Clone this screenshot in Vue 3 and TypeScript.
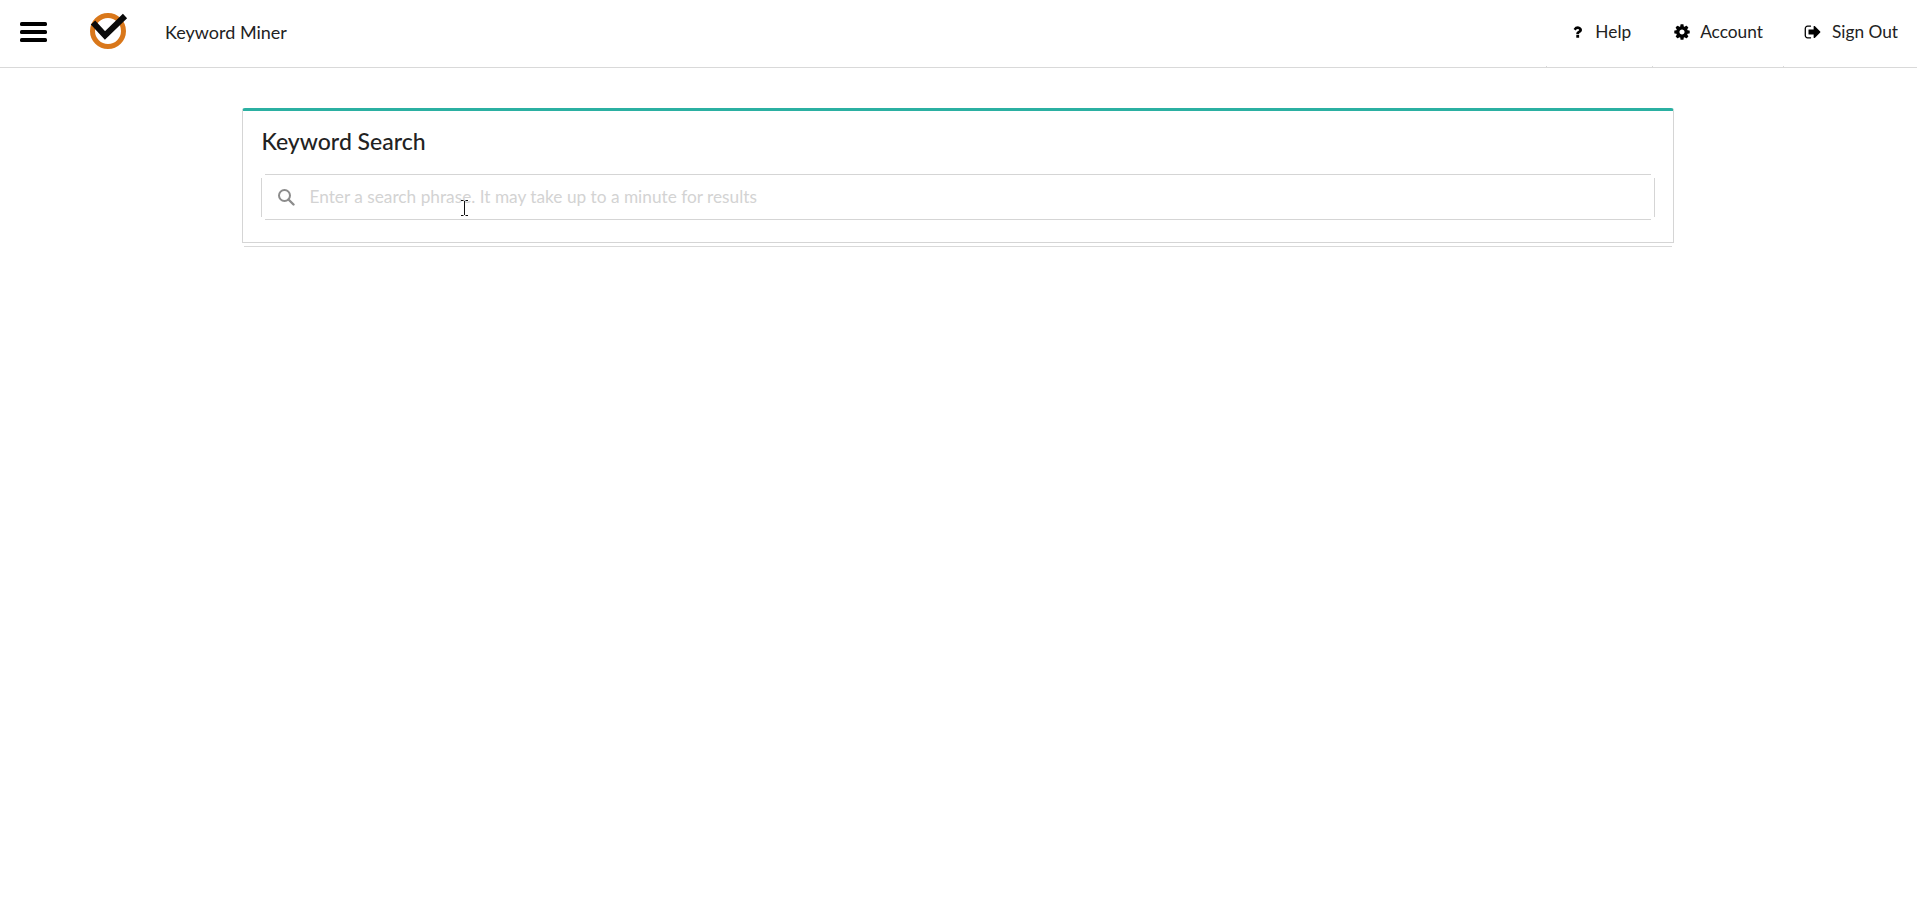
<script setup lang="ts">
const navItems = [
  { label: 'Help', icon: 'help' },
  { label: 'Account', icon: 'account' },
  { label: 'Sign Out', icon: 'signout' },
];

const iconPaths: Record<string, string> = {
  help: 'M1024 1376v240q0 16-12 28t-28 12h-240q-16 0-28-12t-12-28v-240q0-16 12-28t28-12h240q16 0 28 12t12 28zm316-600q0 54-15.5 101t-35 76.5-55 59.5-57.5 43.5-61 35.5q-41 23-68.5 65t-27.5 67q0 17-12 32.5t-28 15.5h-240q-15 0-25.5-18.5t-10.5-37.5v-45q0-83 65-156.5t143-108.5q59-27 84-56t25-76q0-42-46.5-74t-107.5-32q-65 0-108 29-35 25-107 115-13 16-31 16-12 0-25-8l-164-125q-13-10-15.5-25t5.5-28q160-266 464-266 80 0 161 31t146 83 106 127.5 41 158.5z',
  account: 'M1152 896q0-106-75-181t-181-75-181 75-75 181 75 181 181 75 181-75 75-181zm512-109v222q0 12-8 23t-20 13l-185 28q-19 54-39 91 35 50 107 138 10 12 10 25t-9 23q-27 37-99 108t-94 71q-12 0-26-9l-138-108q-44 23-91 38-16 136-29 186-7 28-36 28h-222q-14 0-24.5-8.5t-11.5-21.5l-28-184q-49-16-90-37l-141 107q-10 9-25 9-14 0-25-11-126-114-165-168-7-10-7-23 0-12 8-23 15-21 51-66.5t54-70.5q-27-50-41-99l-183-27q-13-2-21-12.5t-8-23.5v-222q0-12 8-23t19-13l186-28q14-46 39-92-40-57-107-138-10-12-10-24 0-10 9-23 26-36 98.5-107.5t94.5-71.5q13 0 26 10l138 107q44-23 91-38 16-136 29-186 7-28 36-28h222q14 0 24.5 8.5t11.5 21.5l28 184q49 16 90 37l142-107q9-9 24-9 13 0 25 10 129 119 165 170 7 8 7 22 0 12-8 23-15 21-51 66.5t-54 70.5q26 50 41 98l183 28q13 2 21 12.5t8 23.5z',
  signout: 'M704 1440q0 4 1 20t.5 26.5-3 23.5-10 19.5-20.5 6.5h-320q-119 0-203.5-84.5t-84.5-203.5v-704q0-119 84.5-203.5t203.5-84.5h320q13 0 22.5 9.5t9.5 22.5q0 4 1 20t.5 26.5-3 23.5-10 19.5-20.5 6.5h-320q-66 0-113 47t-47 113v704q0 66 47 113t113 47h312l11.5 1 11.5 3 8 5.5 7 9 2 13.5zm928-544q0 26-19 45l-544 544q-19 19-45 19t-45-19-19-45v-288h-448q-26 0-45-19t-19-45v-384q0-26 19-45t45-19h448v-288q0-26 19-45t45-19 45 19l544 544q19 19 19 45z',
};
</script>

<template>
  <div class="page">
    <header class="topbar">
      <svg class="burger" viewBox="0 0 27 20" width="27" height="20">
        <rect x="0" y="0" width="27" height="4" rx="1.6" />
        <rect x="0" y="8" width="27" height="4" rx="1.6" />
        <rect x="0" y="16" width="27" height="4" rx="1.6" />
      </svg>
      <svg class="logo" viewBox="0 0 38 38" width="38" height="38">
        <circle cx="18" cy="19" r="15.5" fill="none" stroke="#d9771a" stroke-width="5" />
        <path d="M3 10.5 L15 23.5 L35 4" fill="none" stroke="#0a0a0a" stroke-width="6" />
      </svg>
      <span class="app-name">Keyword Miner</span>
      <nav class="nav">
        <a v-for="item in navItems" :key="item.label" class="nav-item" :class="item.icon">
          <svg class="nav-icon" viewBox="0 0 1792 1792">
            <path :d="iconPaths[item.icon]" />
          </svg>
          {{ item.label }}
        </a>
      </nav>
    </header>

    <main class="content">
      <section class="card">
        <h2 class="card-title">Keyword Search</h2>
        <div class="search">
          <span class="side"></span>
          <div class="field">
            <svg class="search-icon" viewBox="0 0 18 18" width="18" height="18">
              <circle cx="7.5" cy="7.5" r="5.5" fill="none" stroke="#8c8c8c" stroke-width="2" />
              <path d="M11.5 11.5 L16.5 16.5" fill="none" stroke="#8c8c8c" stroke-width="2.4" stroke-linecap="round" />
            </svg>
            <input type="text" placeholder="Enter a search phrase. It may take up to a minute for results" />
          </div>
          <span class="side"></span>
          <svg class="ibeam" viewBox="0 0 9 16" width="9" height="16">
            <path d="M1 .5h2.5M5.5 .5H8M4.5 1v14M1 15.5h2.5M5.5 15.5H8" fill="none" stroke="#111" stroke-width="1" />
          </svg>
        </div>
      </section>
      <div class="card-shadow"></div>
    </main>
  </div>
</template>

<style scoped>
.page {
  min-height: 921px;
  background: #fff;
  font-family: Lato, "Open Sans", sans-serif;
  color: #222;
}

.topbar {
  display: flex;
  align-items: center;
  height: 67px;
  border-bottom: 1px solid #d9d9d9;
  padding-left: 20px;
  padding-right: 19px;
}

.burger {
  fill: #000;
  margin-right: 43px;
  margin-bottom: 3px;
}

.logo {
  margin-bottom: 5px;
  margin-right: 37px;
}

.app-name {
  font-size: 18px;
  color: #222;
  margin-bottom: 4px;
}

.nav {
  display: flex;
  align-self: stretch;
  margin-left: auto;
  gap: 41.5px;
}

.nav-item {
  position: relative;
  display: flex;
  align-items: center;
  gap: 9.5px;
  padding-bottom: 4px;
  font-size: 17.3px;
  color: #222;
}

.nav-item::before {
  content: "";
  position: absolute;
  left: -21px;
  bottom: 0;
  width: 1px;
  height: 1px;
  background: #d9d9d9;
}

.nav-item.help::before {
  left: -24px;
}

.nav-icon {
  fill: #000;
  width: 18px;
  height: 18px;
}

.help .nav-icon {
  width: 16px;
  height: 16px;
  margin-bottom: 2px;
}

.content {
  width: 1432px;
  margin: 40px auto 0;
  transform: translateX(-1px);
}

.card {
  border: 1px solid #d5d5d5;
  border-top: 3px solid #2bb0a2;
  border-radius: 3px 3px 0 0;
  padding: 15px 18px 22px;
}

.card-title {
  margin: 0 0 18px;
  padding-left: 1px;
  font-size: 23px;
  font-weight: 500;
  line-height: 30px;
  color: #222;
}

.search {
  position: relative;
  display: flex;
  align-items: center;
}

.side {
  width: 1px;
  height: 39px;
  background: #d5d5d5;
}

.field {
  flex: 1;
  display: flex;
  align-items: center;
  height: 46px;
  margin: 0 3px;
  box-sizing: border-box;
  border-top: 1px solid #d5d5d5;
  border-bottom: 1px solid #d5d5d5;
  padding-left: 12px;
}

.search-icon {
  flex: none;
  margin-right: 15px;
}

input {
  flex: 1;
  border: none;
  outline: none;
  padding: 0;
  margin-bottom: 1px;
  font: inherit;
  font-size: 17.25px;
  background: transparent;
}

input::placeholder {
  color: #d3d3d3;
  opacity: 1;
}

.ibeam {
  position: absolute;
  left: 199px;
  top: 26px;
}

.card-shadow {
  height: 3px;
  margin: 0 2px;
  border-bottom: 1px solid #d9d9d9;
}
</style>
